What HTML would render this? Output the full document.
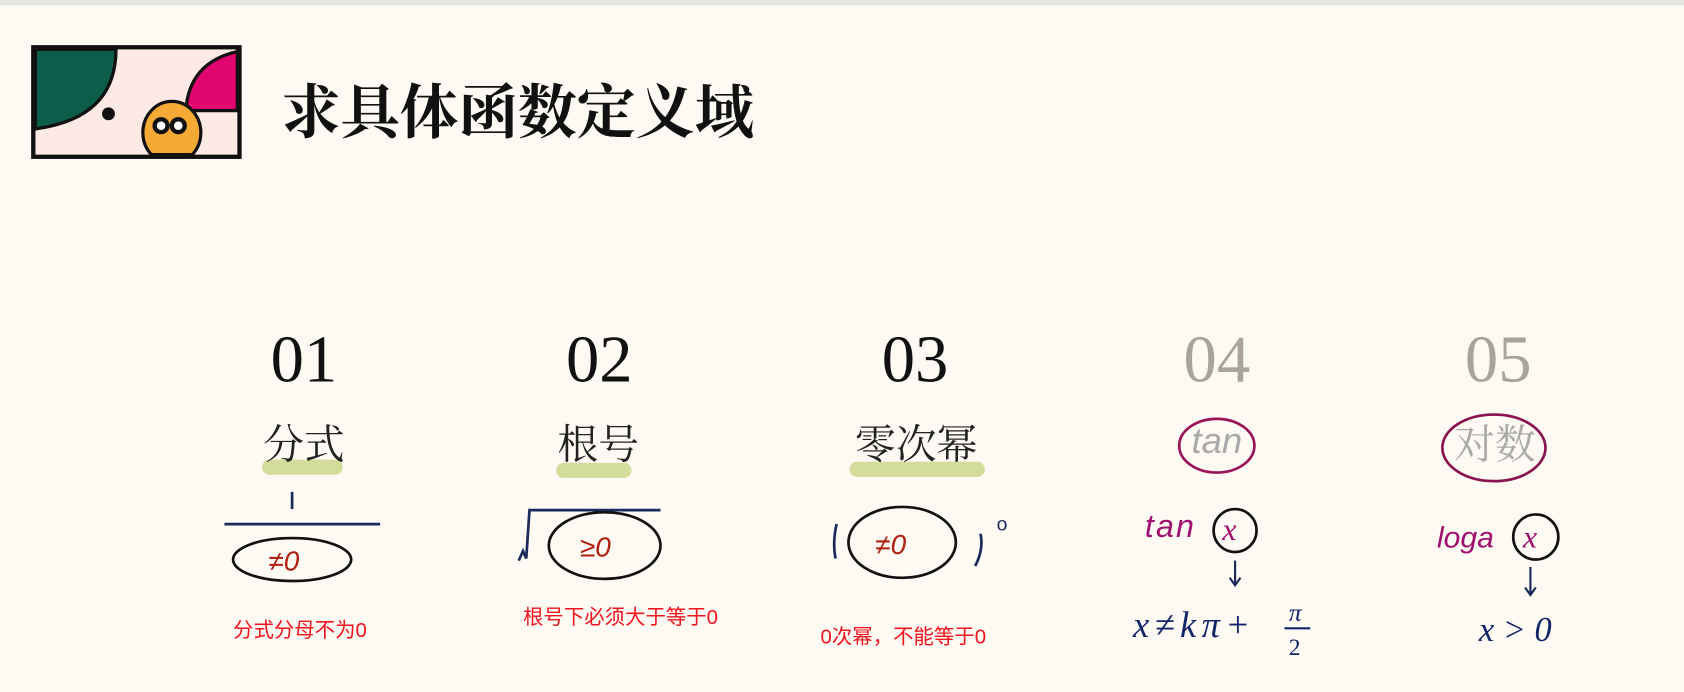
<!DOCTYPE html>
<html><head><meta charset="utf-8"><style>
body{margin:0;width:1684px;height:692px;background:#fdf9f3;overflow:hidden;font-family:"Liberation Serif","Noto Serif CJK SC",serif}
#w{position:absolute;left:0;top:0;width:1568px;height:644px;transform:scale(1.07398);transform-origin:0 0}
.top{position:absolute;left:0;top:0;width:1568px;height:5px;background:#e4e4e2}
.t{position:absolute;white-space:nowrap}
.num{font-size:62px;top:300px;transform:translateX(-50%);color:#111;line-height:70px}
.lab{font-size:38px;top:386px;transform:translateX(-50%);font-family:"Noto Serif CJK SC",serif;color:#222;z-index:2;line-height:50px}
.hl{position:absolute;height:14px;background:#d3dc98;border-radius:7px}
.red{font-family:"Liberation Sans","Noto Sans CJK SC",sans-serif;font-size:19px;color:#f0141e}
</style></head><body><div id="w">
<div class="top"></div>
<svg style="position:absolute;left:0;top:0" width="1568" height="644">
<rect x="31" y="44" width="192" height="102" fill="#fdeae4" stroke="#111" stroke-width="4"/>
<path d="M33 46 H108 Q108 110 33 120 Z" fill="#0c5e4b" stroke="#111" stroke-width="3"/>
<path d="M221 46 V103 H173 Q176 58 221 48 Z" fill="#e0046e" stroke="#111" stroke-width="3"/>
<line x1="173" y1="103" x2="221" y2="103" stroke="#111" stroke-width="2"/>
<circle cx="101" cy="106" r="6" fill="#111"/>
<path d="M141 144 A27 29 0 1 1 179 144 Z" fill="#f6aa36" stroke="#111" stroke-width="3"/>
<circle cx="150" cy="117" r="6" fill="#fff" stroke="#111" stroke-width="4"/>
<circle cx="166" cy="117" r="6" fill="#fff" stroke="#111" stroke-width="4"/>
<!-- 01 -->
<line x1="272" y1="458" x2="272" y2="474" stroke="#1a2a5a" stroke-width="2.5"/>
<line x1="209" y1="488" x2="354" y2="488" stroke="#1a2a5a" stroke-width="2.5"/>
<ellipse cx="272" cy="521" rx="55" ry="20" fill="none" stroke="#111" stroke-width="2.5"/>
<text x="250" y="531" font-size="26" fill="#b02010" font-style="italic" font-family="Liberation Sans">≠0</text>
<!-- 02 -->
<path d="M483 522 L487 513 L490 520 L493 475 H615" fill="none" stroke="#1a2a5a" stroke-width="2.5"/>
<ellipse cx="563" cy="508" rx="52" ry="31" fill="none" stroke="#111" stroke-width="2.5"/>
<text x="540" y="518" font-size="26" fill="#b02010" font-style="italic" font-family="Liberation Sans">≥0</text>
<!-- 03 -->
<path d="M779 488 Q775 505 778 520" fill="none" stroke="#1a2a5a" stroke-width="2.5"/>
<ellipse cx="840" cy="505" rx="50" ry="33" fill="none" stroke="#111" stroke-width="2.5"/>
<text x="815" y="516" font-size="26" fill="#b02010" font-style="italic" font-family="Liberation Sans">≠0</text>
<path d="M913 497 Q916 512 908 527" fill="none" stroke="#1a2a5a" stroke-width="2.5"/>
<text x="928" y="494" font-size="18" fill="#1a2a5a" font-family="Liberation Sans">o</text>
<!-- 04 -->
<ellipse cx="1133" cy="415" rx="35" ry="25" fill="none" stroke="#9a1458" stroke-width="2.5"/>
<text x="1066" y="500" font-size="30" fill="#a0106e" font-style="italic" font-family="Liberation Sans" letter-spacing="2">tan</text>
<circle cx="1150" cy="494" r="20" fill="none" stroke="#111" stroke-width="2.5"/>
<text x="1138" y="503" font-size="30" fill="#a0106e" font-style="italic" font-family="Liberation Serif">x</text>
<path d="M1150 522 V544 M1145 538 L1150 545 L1155 538" fill="none" stroke="#1a2a5a" stroke-width="2"/>
<text x="1055" y="593" font-size="34" fill="#14266a" font-style="italic" font-family="Liberation Serif" letter-spacing="5">x≠kπ+</text>
<text x="1200" y="578" font-size="24" fill="#14266a" font-style="italic" font-family="Liberation Serif">π</text>
<line x1="1196" y1="585" x2="1220" y2="585" stroke="#14266a" stroke-width="2"/>
<text x="1200" y="610" font-size="22" fill="#14266a" font-family="Liberation Serif">2</text>
<!-- 05 -->
<ellipse cx="1391" cy="417" rx="48" ry="31" fill="none" stroke="#8a1450" stroke-width="2.5"/>
<text x="1338" y="510" font-size="28" fill="#a0106e" font-style="italic" font-family="Liberation Sans">loga</text>
<circle cx="1430" cy="500" r="21" fill="none" stroke="#111" stroke-width="2.5"/>
<text x="1418" y="510" font-size="30" fill="#a0106e" font-style="italic" font-family="Liberation Serif">x</text>
<path d="M1425 528 V553 M1420 547 L1425 554 L1430 547" fill="none" stroke="#1a2a5a" stroke-width="2"/>
<text x="1377" y="597" font-size="32" fill="#14266a" font-style="italic" font-family="Liberation Serif">x &gt; 0</text>
</svg>
<div class="t" style="left:262px;top:66px;font-size:55px;line-height:70px;font-weight:bold;font-family:'Noto Serif CJK SC',serif;color:#111">求具体函数定义域</div>
<div class="t num" style="left:283px">01</div>
<div class="t num" style="left:558px">02</div>
<div class="t num" style="left:852px">03</div>
<div class="t num" style="left:1133px;color:#a8a49c">04</div>
<div class="t num" style="left:1395px;color:#a8a49c">05</div>
<div class="hl" style="left:244px;top:428px;width:75px"></div>
<div class="hl" style="left:518px;top:431px;width:70px"></div>
<div class="hl" style="left:791px;top:430px;width:126px"></div>
<div class="t lab" style="left:283px">分式</div>
<div class="t lab" style="left:557px">根号</div>
<div class="t lab" style="left:853px">零次幂</div>
<div class="t lab" style="left:1133px;color:#aaa;font-family:'Liberation Sans',sans-serif;font-style:italic;font-size:34px">tan</div>
<div class="t lab" style="left:1392px;color:#aaa">对数</div>
<div class="t red" style="left:217px;top:572px">分式分母不为0</div>
<div class="t red" style="left:487px;top:560px">根号下必须大于等于0</div>
<div class="t red" style="left:764px;top:578px">0次幂，不能等于0</div>
</div></body></html>
